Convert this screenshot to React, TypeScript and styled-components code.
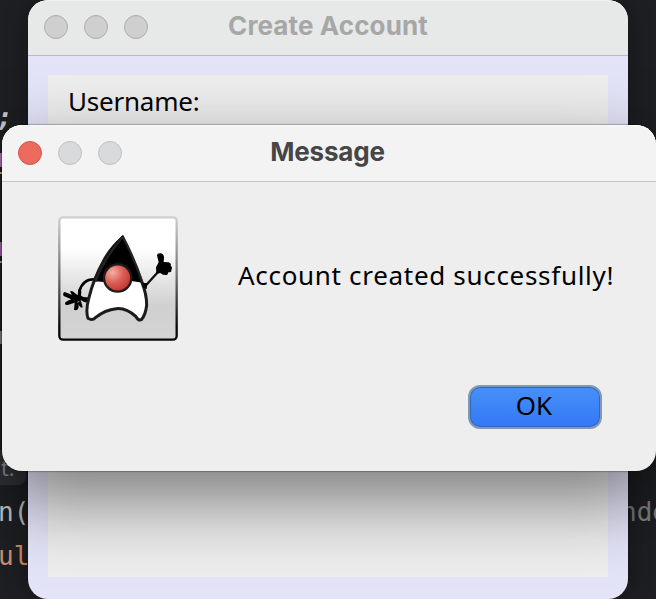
import React from "react";
import styled, { createGlobalStyle } from "styled-components";

const GlobalStyle = createGlobalStyle`
  * { box-sizing: border-box; }
  html, body { margin: 0; overflow: hidden; background: #1e1f22; }
`;

const Desktop = styled.main`
  position: relative;
  width: 656px;
  height: 599px;
  overflow: hidden;
  background: #1e1f22;
`;

const Code = styled.span<{ $x: number; $y: number; $color: string; $italic?: boolean }>`
  position: absolute;
  left: ${(p) => p.$x}px;
  top: ${(p) => p.$y}px;
  color: ${(p) => p.$color};
  font: ${(p) => (p.$italic ? "italic 700" : "normal 400")} 26px/32px "DejaVu Sans Mono", monospace;
  white-space: pre;
`;

const Hint = styled.span`
  position: absolute;
  left: -20px;
  top: 450px;
  width: 46px;
  height: 35px;
  padding-left: 21px;
  border-radius: 8px;
  background: #303237;
  color: #8a8d93;
  font: 22px/35px "Open Sans", sans-serif;
`;

const Mark = styled.span<{ $y: number; $h: number; $color: string }>`
  position: absolute;
  left: 0;
  top: ${(p) => p.$y}px;
  width: 2px;
  height: ${(p) => p.$h}px;
  background: ${(p) => p.$color};
`;

const Frame = styled.section`
  position: absolute;
  left: 28px;
  top: 0;
  width: 600px;
  height: 599px;
  display: flex;
  flex-direction: column;
  overflow: hidden;
  border-radius: 20px;
  background: #e4e4f8;
  box-shadow: 0 0 22px rgba(0, 0, 0, 0.35);
`;

const Dialog = styled.section`
  position: absolute;
  left: 2px;
  top: 125px;
  width: 654px;
  height: 346px;
  display: flex;
  flex-direction: column;
  border-radius: 20px;
  background: #eeeeee;
  box-shadow: 0 0 1px 1px rgba(0, 0, 0, 0.25), 0 28px 76px rgba(0, 0, 0, 0.5);
`;

const TitleBar = styled.header<{ $active?: boolean }>`
  flex: none;
  height: ${(p) => (p.$active ? 57 : 56)}px;
  display: grid;
  grid-template-columns: 120px 1fr 120px;
  padding: 0 14px;
  border-radius: 20px 20px 0 0;
  border-bottom: 1px solid ${(p) => (p.$active ? "#c5c5c6" : "#bbbbc8")};
  background: ${(p) => (p.$active ? "#f3f3f3" : "#e7e9e8")};
  box-shadow: inset 0 1px ${(p) => (p.$active ? "#fafafa" : "#f0f1f0")};
`;

const Lights = styled.div`
  display: flex;
  gap: 16px;
  padding: 15px 0 0 2px;
`;

const Light = styled.span<{ $tone: "red" | "pale" | "gray" }>`
  width: 24px;
  height: 24px;
  border-radius: 50%;
  border: 1px solid ${(p) => ({ red: "#d3564c", pale: "#bfc0c1", gray: "#acacac" })[p.$tone]};
  background: ${(p) => ({ red: "#ed6a5f", pale: "#d9dadb", gray: "#cfcfd0" })[p.$tone]};
`;

const DialogLights = styled(Lights)`
  padding: 16px 0 0 2px;
`;

const Title = styled.h1<{ $active?: boolean }>`
  margin: 0;
  padding: ${(p) => (p.$active ? "10px 3px 0 0" : "9px 0 0")};
  text-align: center;
  white-space: nowrap;
  color: ${(p) => (p.$active ? "#464646" : "#a6a7a6")};
  font: 700 26px/34px Inter, sans-serif;
  letter-spacing: ${(p) => (p.$active ? -0.2 : 0.12)}px;
`;

const Panel = styled.div`
  flex: none;
  width: 560px;
  height: 502px;
  margin: 19px auto 0;
  padding: 8px 20px;
  background: #eeeeee;
`;

const Label = styled.label`
  display: block;
  color: #000;
  font: 26px/36px "Noto Sans", sans-serif;
  letter-spacing: -0.22px;
`;

const Body = styled.div`
  height: 159px;
  display: grid;
  grid-template-columns: 120px auto;
  gap: 60px;
  padding: 34px 0 0 56px;
`;

const Message = styled.p`
  margin: 0;
  padding-top: 40px;
  color: #000;
  font: 26px/38px "Noto Sans", sans-serif;
  letter-spacing: 0.69px;
  white-space: nowrap;
`;

const Footer = styled.footer`
  display: flex;
  justify-content: flex-end;
  padding: 44px 54px 0 0;
`;

const OkButton = styled.button`
  width: 134px;
  height: 44px;
  padding: 0 2px 4px 0;
  border: 2px solid #8199b5;
  border-radius: 12px;
  background: linear-gradient(#4690f8, #3478f6);
  box-shadow: inset 0 0 0 1px #3266b8;
  color: #000;
  font: 26px/36px "Noto Sans", sans-serif;
`;

const DukeSvg = styled.svg`
  display: block;
  width: 120px;
  height: 125px;
`;

const Duke = () => (
  <DukeSvg viewBox="24 24 360 375" role="img" aria-label="Duke">
    <defs>
      <linearGradient id="card" x1="0" y1="0" x2="0" y2="1">
        <stop offset="0.25" stopColor="#fff" />
        <stop offset="0.72" stopColor="#d0d0d0" />
        <stop offset="1" stopColor="#d4d4d4" />
      </linearGradient>
      <linearGradient id="edge" x1="0" y1="0" x2="0" y2="1">
        <stop offset="0" stopColor="#cfcfcf" />
        <stop offset="0.45" stopColor="#777" />
        <stop offset="0.9" stopColor="#080808" />
      </linearGradient>
      <radialGradient id="nose" cx="0.32" cy="0.3" r="0.75">
        <stop offset="0" stopColor="#f5afa2" />
        <stop offset="0.5" stopColor="#dc5f56" />
        <stop offset="1" stopColor="#be3532" />
      </radialGradient>
    </defs>
    <rect x="28" y="28" width="352" height="367" rx="11" fill="url(#card)" stroke="url(#edge)" strokeWidth="7" />
    <path d="M137 214Q99 211 88 250" fill="none" stroke="#000" strokeWidth="8" />
    <path
      d="M85 244L94 249L93 263Q103 270 115 267L112 283Q101 284 94 277L82 281L86 293Q87 305 76 307L72 305L74 284L53 291Q44 291 45 285Q47 281 64 274L41 264Q37 256 43 252L66 260L60 251Q64 247 70 251L83 262Z"
      fill="#000"
    />
    <path d="M92 276L97 293Q100 299 95 299Q90 298 82 286" fill="#000" />
    <path d="M284 236L324 192" fill="none" stroke="#111" strokeWidth="7" />
    <path
      d="M319 198L318 178L326 163L321 142Q322 134 333 136Q343 139 342 150L341 162L356 163Q365 166 362 174Q369 178 364 185Q366 193 355 193L352 200Q339 203 331 195Z"
      fill="#000"
    />
    <path
      d="M218 88L243 142Q263 189 276 224Q290 259 290 291Q287 321 274 335Q265 339 258 326Q229 299 199 302Q165 305 136 329Q127 339 114 331Q106 307 117 269Q130 213 161 158Q183 117 218 88Z"
      fill="#fff"
      stroke="#1b1b1b"
      strokeWidth="9"
    />
    <path d="M218 81L247 143L278 224L244 219Q244 173 204 171Q162 174 164 222L132 220Q158 155 190 113Z" fill="#000" />
    <path d="M218 86L190 122Q152 174 136 221" fill="none" stroke="#242424" strokeWidth="7" />
    <path d="M218 86Q252 148 277 223" fill="none" stroke="#242424" strokeWidth="7" />
    <path d="M278 224L292 226L290 243L282 241Z" fill="#000" />
    <circle cx="203" cy="210" r="41" fill="url(#nose)" stroke="#201c1b" strokeWidth="7" />
  </DukeSvg>
);

export default function App() {
  return (
    <Desktop>
      <GlobalStyle />
      <Code $x={-3} $y={101} $color="#c4c6cb" $italic>;</Code>
      <Mark $y={153} $h={14} $color="#b06cb5" />
      <Mark $y={172} $h={2} $color="#c9a966" />
      <Mark $y={242} $h={14} $color="#b06cb5" />
      <Mark $y={261} $h={2} $color="#c9a966" />
      <Mark $y={331} $h={13} $color="#85878b" />
      <Hint>t.</Hint>
      <Code $x={-2} $y={496} $color="#c2c4c8">n(</Code>
      <Code $x={-2} $y={540} $color="#cf8e6d">ul</Code>
      <Code $x={621} $y={496} $color="#7d7f83">nde</Code>
      <Frame>
        <TitleBar>
          <Lights>
            <Light $tone="gray" />
            <Light $tone="gray" />
            <Light $tone="gray" />
          </Lights>
          <Title>Create Account</Title>
        </TitleBar>
        <Panel>
          <Label>Username:</Label>
        </Panel>
      </Frame>
      <Dialog>
        <TitleBar $active>
          <DialogLights>
            <Light $tone="red" />
            <Light $tone="pale" />
            <Light $tone="pale" />
          </DialogLights>
          <Title $active>Message</Title>
        </TitleBar>
        <Body>
          <Duke />
          <Message>Account created successfully!</Message>
        </Body>
        <Footer>
          <OkButton>OK</OkButton>
        </Footer>
      </Dialog>
    </Desktop>
  );
}
